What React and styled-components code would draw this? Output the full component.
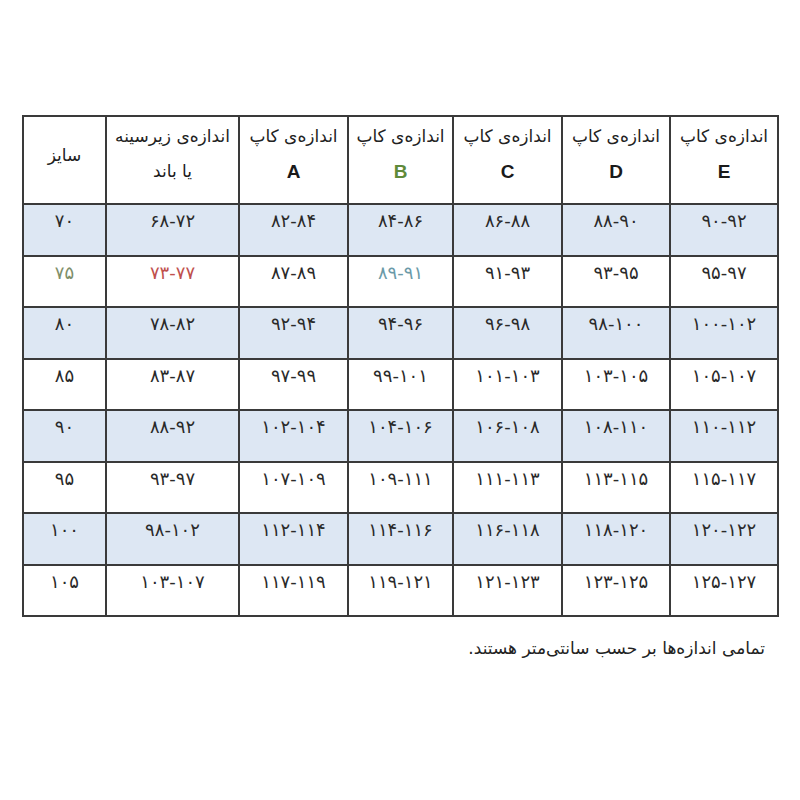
import React from 'react';
import styled, {createGlobalStyle} from 'styled-components';

const GlobalStyle = createGlobalStyle`
  html, body {
    margin: 0;
    padding: 0;
    background: #fff;
  }
  body {
    font-family: "DejaVu Sans", "Noto Sans", sans-serif;
    color: #222;
  }
`;

const headers = [
    {title: 'سایز'},
    {title: 'اندازه‌ی زیرسینه', sub: 'یا باند', subFarsi: true},
    {title: 'اندازه‌ی کاپ', sub: 'A'},
    {title: 'اندازه‌ی کاپ', sub: 'B', subColor: '#5f8a3a'},
    {title: 'اندازه‌ی کاپ', sub: 'C'},
    {title: 'اندازه‌ی کاپ', sub: 'D'},
    {title: 'اندازه‌ی کاپ', sub: 'E'},
];

const rows = [
    ['۷۰', '۶۸-۷۲', '۸۲-۸۴', '۸۴-۸۶', '۸۶-۸۸', '۸۸-۹۰', '۹۰-۹۲'],
    ['۷۵', '۷۳-۷۷', '۸۷-۸۹', '۸۹-۹۱', '۹۱-۹۳', '۹۳-۹۵', '۹۵-۹۷'],
    ['۸۰', '۷۸-۸۲', '۹۲-۹۴', '۹۴-۹۶', '۹۶-۹۸', '۹۸-۱۰۰', '۱۰۰-۱۰۲'],
    ['۸۵', '۸۳-۸۷', '۹۷-۹۹', '۹۹-۱۰۱', '۱۰۱-۱۰۳', '۱۰۳-۱۰۵', '۱۰۵-۱۰۷'],
    ['۹۰', '۸۸-۹۲', '۱۰۲-۱۰۴', '۱۰۴-۱۰۶', '۱۰۶-۱۰۸', '۱۰۸-۱۱۰', '۱۱۰-۱۱۲'],
    ['۹۵', '۹۳-۹۷', '۱۰۷-۱۰۹', '۱۰۹-۱۱۱', '۱۱۱-۱۱۳', '۱۱۳-۱۱۵', '۱۱۵-۱۱۷'],
    ['۱۰۰', '۹۸-۱۰۲', '۱۱۲-۱۱۴', '۱۱۴-۱۱۶', '۱۱۶-۱۱۸', '۱۱۸-۱۲۰', '۱۲۰-۱۲۲'],
    ['۱۰۵', '۱۰۳-۱۰۷', '۱۱۷-۱۱۹', '۱۱۹-۱۲۱', '۱۲۱-۱۲۳', '۱۲۳-۱۲۵', '۱۲۵-۱۲۷'],
];

// cells on the 75 row carry their own colour in the source chart
const highlight = {
    '1-0': '#7f8f6a',
    '1-1': '#c0504d',
    '1-3': '#6b9aa8',
};

const widths = [83, 133, 109, 105, 109, 108, 108];

const App = () => {
    return (
        <Page>
            <GlobalStyle />
            <SizeTable>
                <colgroup>
                    {widths.map((w, i) => <col key={i} style={{width: w}} />)}
                </colgroup>
                <thead>
                    <HeadRow>
                        {headers.map((h, i) => (
                            <HeadCell key={i} $single={!h.sub}>
                                <HeadTitle>{h.title}</HeadTitle>
                                {h.sub && (
                                    <HeadSub $farsi={h.subFarsi} $color={h.subColor}>{h.sub}</HeadSub>
                                )}
                            </HeadCell>
                        ))}
                    </HeadRow>
                </thead>
                <tbody>
                    {rows.map((row, r) => (
                        <BodyRow key={r} $shaded={r % 2 === 0}>
                            {row.map((val, c) => (
                                <BodyCell key={c} $color={highlight[`${r}-${c}`]}>{val}</BodyCell>
                            ))}
                        </BodyRow>
                    ))}
                </tbody>
            </SizeTable>
            <Note>تمامی اندازه‌ها بر حسب سانتی‌متر هستند.</Note>
        </Page>
    );
};

export default App;

const Page = styled.div`
width: 800px;
height: 800px;
padding: 115px 0 0 22px;
box-sizing: border-box;
`;

const SizeTable = styled.table`
width: 756px;
border-collapse: collapse;
table-layout: fixed;
border: 2px solid #3a3a3a;
`;

const HeadRow = styled.tr`
height: 88px;
background: #fff;
`;

const HeadCell = styled.th`
border: 2px solid #3a3a3a;
padding: 0 2px ${p => (p.$single ? '10px' : '12px')};
text-align: center;
vertical-align: middle;
font-weight: normal;
`;

const HeadTitle = styled.div`
direction: rtl;
font-size: 17px;
line-height: 35px;
color: #222;
`;

const HeadSub = styled.div`
direction: ${p => (p.$farsi ? 'rtl' : 'ltr')};
font-family: ${p => (p.$farsi ? '"DejaVu Sans", sans-serif' : '"Liberation Sans", Arial, sans-serif')};
font-size: ${p => (p.$farsi ? '17px' : '19px')};
font-weight: ${p => (p.$farsi ? 'normal' : 'bold')};
line-height: 35px;
color: ${p => p.$color || '#1a1a1a'};
`;

const BodyRow = styled.tr`
height: 51.5px;
background: ${p => (p.$shaded ? '#dde7f3' : '#fff')};
`;

const BodyCell = styled.td`
border: 2px solid #3a3a3a;
padding: 4px 2px 0;
text-align: center;
vertical-align: top;
direction: ltr;
font-size: 18px;
line-height: 24px;
letter-spacing: 0.5px;
color: ${p => p.$color || '#2a2a2a'};
`;

const Note = styled.p`
width: 743px;
margin: 21px 0 0;
direction: rtl;
text-align: right;
font-size: 17px;
color: #222;
`;
